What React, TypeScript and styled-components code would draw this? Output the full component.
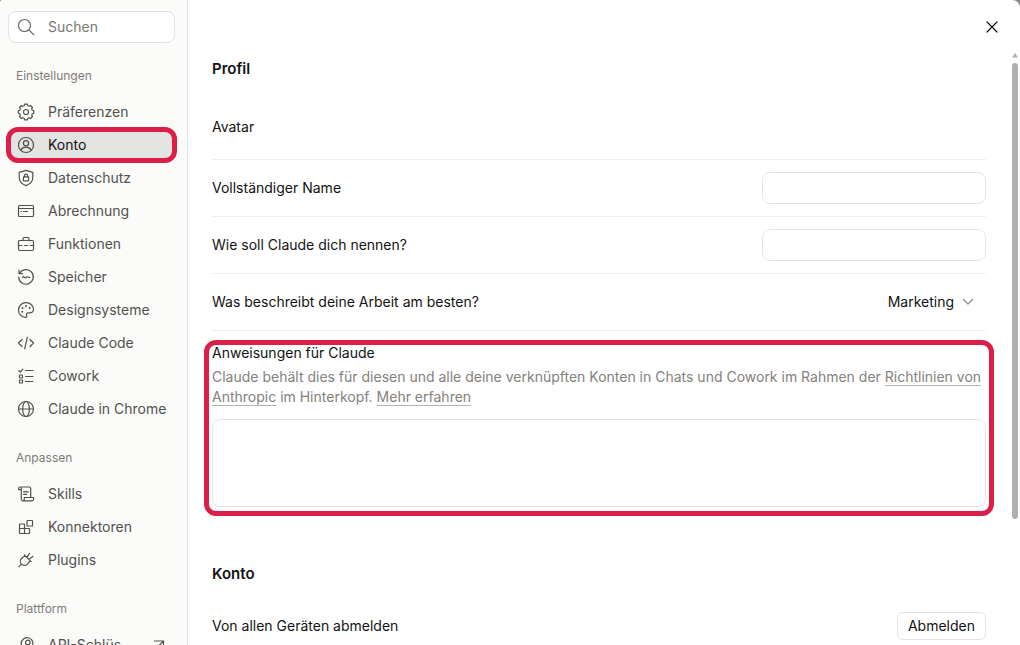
import React from 'react';
import styled, { createGlobalStyle, css } from 'styled-components';

const GlobalStyle = createGlobalStyle`
  *, *::before, *::after { box-sizing: border-box; }
  body {
    margin: 0;
    background: #8c8c8c;
    color: #121212;
    font-family: Inter, "Liberation Sans", sans-serif;
    font-size: 14px;
    line-height: 20px;
  }
  button, input, select, textarea { font: inherit; color: inherit; }
`;

const marked = css`
  position: relative;
  &::after {
    content: '';
    position: absolute;
    border: 5px solid #db1f48;
    border-radius: 12px;
    pointer-events: none;
  }
`;

const Dialog = styled.div`
  display: flex;
  height: 100vh;
  overflow: hidden;
  background: #fff;
  border-radius: 3px 8px 0 0;
`;

const Sidebar = styled.nav`
  flex: 0 0 188px;
  padding: 11px 12px 0 8px;
  border-right: 1px solid #e3e3e2;
  background: #fbfbfa;
  overflow: hidden;
`;

const SearchBox = styled.label`
  display: flex;
  align-items: center;
  gap: 12px;
  height: 32px;
  padding: 0 7px;
  border: 1px solid #e2e2e1;
  border-radius: 8px;
  background: #fff;
  color: #6b6b69;
`;

const SearchInput = styled.input`
  flex: 1;
  min-width: 0;
  padding: 0;
  border: 0;
  outline: 0;
  background: none;
  &::placeholder { color: #7b7974; opacity: 1; }
`;

const Group = styled.section`
  padding-top: 23px;
`;

const GroupTitle = styled.h3`
  margin: 0 0 10px;
  padding: 0 8px;
  font-size: 12px;
  font-weight: 400;
  line-height: 20px;
  color: #7f7d78;
`;

const NavList = styled.ul`
  display: flex;
  flex-direction: column;
  gap: 1px;
  margin: 0;
  padding: 0;
  list-style: none;
`;

const Glyph = styled.svg`
  flex: none;
  display: block;
  fill: none;
  stroke: currentColor;
  stroke-width: 1.2;
  stroke-linecap: round;
  stroke-linejoin: round;
`;

const NavLink = styled.a<{ $active?: boolean }>`
  display: flex;
  align-items: center;
  gap: 12px;
  height: 32px;
  padding: 0 8px;
  border-radius: 8px;
  color: #52514e;
  text-decoration: none;
  white-space: nowrap;
  ${p => p.$active && css`
    ${marked}
    background: #e3e3e2;
    color: #121212;
    ${Glyph} { color: #52514e; }
    &::after { inset: -2px; }
  `}
`;

const NavText = styled.span`
  flex: 1;
`;

const Main = styled.main`
  flex: 1;
  min-width: 0;
  display: flex;
  flex-direction: column;
`;

const TopBar = styled.header`
  display: flex;
  flex: none;
  justify-content: flex-end;
  padding: 11px 12px 8px;
`;

const IconButton = styled.button`
  display: grid;
  place-items: center;
  width: 32px;
  height: 32px;
  padding: 0;
  border: 0;
  border-radius: 8px;
  background: none;
`;

const ScrollArea = styled.div`
  flex: 1;
  min-height: 0;
  display: flex;
`;

const Content = styled.div`
  flex: 1;
  min-width: 0;
  padding: 8px 24px 0;
  overflow: hidden;
`;

const ScrollTrack = styled.div`
  flex: 0 0 10px;
  display: flex;
  flex-direction: column;
  align-items: center;
  gap: 5px;
  padding-top: 2px;
  color: #afafaf;
`;

const ScrollThumb = styled.div`
  width: 6px;
  height: 77%;
  border-radius: 3px;
  background: #afafaf;
`;

const Heading = styled.h2`
  margin: 0 0 16px;
  font-size: 15px;
  font-weight: 600;
  line-height: 20px;
`;

const Row = styled.div<{ $tall?: boolean }>`
  display: flex;
  align-items: center;
  justify-content: space-between;
  min-height: ${p => (p.$tall ? '65px' : 'auto')};
  padding: 12px 0;
  border-bottom: 1px solid #efefee;
`;

const TextInput = styled.input`
  width: 224px;
  height: 32px;
  padding: 0 12px;
  border: 1px solid #e4e4e3;
  border-radius: 8px;
  background: #fff;
`;

const SelectWrap = styled.span`
  display: flex;
  align-items: center;
  gap: 8px;
  padding-right: 12px;
`;

const Select = styled.select`
  appearance: none;
  height: 32px;
  padding: 0;
  border: 0;
  background: none;
  field-sizing: content;
`;

const Instructions = styled.div`
  ${marked}
  margin-top: 12px;
  margin-bottom: 57px;
  &::after { inset: -3px -8px -9px; }
`;

const Label = styled.label`
  display: block;
`;

const Hint = styled.p`
  margin: 4px 0 12px;
  color: #83817c;
`;

const HintLink = styled.a`
  color: inherit;
  text-decoration: none;
  border-bottom: 1px solid #b5b4b0;
`;

const TextArea = styled.textarea`
  display: block;
  width: 100%;
  height: 88px;
  padding: 8px 12px;
  border: 1px solid #e4e4e3;
  border-radius: 8px;
  background: #fff;
  resize: none;
`;

const OutlineButton = styled.button`
  height: 28px;
  padding: 0 10px;
  border: 1px solid #e2e2e1;
  border-radius: 6px;
  background: #fff;
`;

const Icon = ({ children, size = 20 }: { children: React.ReactNode; size?: number }) => (
  <Glyph width={size} height={size} viewBox={`0 0 ${size} ${size}`} aria-hidden="true">
    {children}
  </Glyph>
);

// Eight-toothed cog: each tooth is a flat top between two shallow valleys.
const cogPath = (() => {
  const at = (deg: number, r: number) => {
    const a = (deg * Math.PI) / 180;
    return `${(10 + r * Math.cos(a)).toFixed(2)} ${(10 + r * Math.sin(a)).toFixed(2)}`;
  };
  const teeth = Array.from({ length: 8 }, (_, i) => {
    const a = i * 45;
    return `${at(a - 10, 7.9)} L${at(a + 10, 7.9)} L${at(a + 15, 6.7)} Q${at(a + 22.5, 6)} ${at(a + 30, 6.7)}`;
  });
  return `M${teeth.join(' L')}Z`;
})();

const icons = {
  gear: (
    <Icon>
      <path d={cogPath} />
      <circle cx="10" cy="10" r="2.5" />
    </Icon>
  ),
  user: (
    <Icon>
      <circle cx="10" cy="10" r="7.5" />
      <circle cx="10" cy="8.3" r="2.6" />
      <path d="M4.8 15.2c1-2 3-3 5.200-3s4.200 1 5.200 3" />
    </Icon>
  ),
  shield: (
    <Icon>
      <path d="M10 2.4 16.800 4.400v5.200c0 4-2.700 6.600-6.800 8-4.100-1.400-6.800-4-6.800-8V4.400z" />
      <rect x="7.4" y="8.900" width="5.200" height="4" rx=".5" />
      <path d="M8.400 8.900V7.700a1.600 1.600 0 0 1 3.200 0v1.200" />
    </Icon>
  ),
  card: (
    <Icon>
      <rect x="2.500" y="4.500" width="15" height="11" rx="1" />
      <path d="M2.500 7.500h15M5 10.500h.5M7.500 10.500h4" />
    </Icon>
  ),
  toolbox: (
    <Icon>
      <rect x="2.500" y="6.500" width="15" height="10" rx="1.200" />
      <path d="M7 6.500V4.700c0-.7.5-1.200 1.200-1.200h3.600c.7 0 1.200.5 1.200 1.200v1.800M2.500 11.500H6M8.500 11.500h3M14 11.500h3.500" />
    </Icon>
  ),
  memory: (
    <Icon>
      <path d="M3.600 6.400A7.300 7.300 0 1 1 2.700 10M3 3.200v3.400h3.400" />
      <path d="M6.300 10.300c.8-.8 1.500-.8 2.100 0s1.200.7 1.800 0 1.300-.8 2 0h1.500" />
    </Icon>
  ),
  palette: (
    <Icon>
      <path d="M10 2.600c4.200 0 7.500 3 7.500 6.700 0 2.400-1.700 3.500-3.600 3.500h-1.500c-1.500 0-2.200 1-1.800 2.300.4 1.300.2 2.400-1.300 2.300-3.900-.2-6.800-3.400-6.800-7.300 0-4.200 3.300-7.500 7.500-7.500z" />
      <g fill="currentColor" stroke="none">
        <circle cx="6.200" cy="11.700" r="1" />
        <circle cx="6.500" cy="8" r="1" />
        <circle cx="10" cy="5.900" r="1" />
        <circle cx="13.600" cy="7.900" r="1" />
      </g>
    </Icon>
  ),
  code: (
    <Icon>
      <path d="M6 6.500 2.500 10 6 13.500M14 6.500l3.500 3.500-3.500 3.500M11.300 4.200 8.700 15.800" />
    </Icon>
  ),
  checklist: (
    <Icon>
      <path d="M3 4.700 4.400 6l2.500-2.900M9.500 4.500H17M9.500 10.500H17M9.500 15.500H17" />
      <rect x="3.500" y="9" width="3" height="3" rx=".6" />
      <rect x="3.500" y="14" width="3" height="3" rx=".6" />
    </Icon>
  ),
  globe: (
    <Icon>
      <circle cx="10" cy="10" r="7.500" />
      <ellipse cx="10" cy="10" rx="3.400" ry="7.500" />
      <path d="M2.500 10h15" />
    </Icon>
  ),
  scroll: (
    <Icon>
      <path d="M5.300 5.600H2.600V4.500c0-.9.600-1.500 1.400-1.500h9.300c.8 0 1.400.6 1.400 1.400v8.900M5.300 4v11.300c0 .9.600 1.500 1.500 1.500H16c1 0 1.600-.8 1.600-1.800v-1.500H8.300V15c0 1-.6 1.800-1.500 1.800" />
      <path d="M7.600 7.900h1.200l.8-.5 1 .5h1.700M7.600 10.300h3" />
    </Icon>
  ),
  blocks: (
    <Icon>
      <path d="M8.500 11.500v-4a.5.500 0 0 0-.5-.5H4a.5.500 0 0 0-.5.500V16a.5.500 0 0 0 .5.500h9a.5.500 0 0 0 .5-.5v-4a.5.500 0 0 0-.5-.5zM3.500 11.500h5v5" />
      <rect x="11" y="3.500" width="5.500" height="5.500" rx=".6" />
    </Icon>
  ),
  plug: (
    <Icon>
      <path d="m8.300 4.900 6.800 6.800M9.200 5.800 5.700 8.300C4 9.900 3.900 12.600 5.400 14.200s4.300 1.700 5.900.2l2.900-3.600M5.300 14.300 3 16.700M10.900 7.300l2.700-3.900M12.900 9.300l4-2.900" />
    </Icon>
  ),
  key: (
    <Icon>
      <path d="M6.500 12.500C4.700 9.500 5 6 7.500 4s6.300-1.600 8.200.9 1.500 6-.9 7.900c-1 .8-2.300 1.100-3.500 1L9 17" />
      <circle cx="11.800" cy="7.500" r="2.300" />
      <path d="m10.200 9.500-4 6" />
    </Icon>
  ),
};

type Entry = { icon: keyof typeof icons; text: string; active?: boolean; external?: boolean };

const groups: { title: string; entries: Entry[] }[] = [
  {
    title: 'Einstellungen',
    entries: [
      { icon: 'gear', text: 'Präferenzen' },
      { icon: 'user', text: 'Konto', active: true },
      { icon: 'shield', text: 'Datenschutz' },
      { icon: 'card', text: 'Abrechnung' },
      { icon: 'toolbox', text: 'Funktionen' },
      { icon: 'memory', text: 'Speicher' },
      { icon: 'palette', text: 'Designsysteme' },
      { icon: 'code', text: 'Claude Code' },
      { icon: 'checklist', text: 'Cowork' },
      { icon: 'globe', text: 'Claude in Chrome' },
    ],
  },
  {
    title: 'Anpassen',
    entries: [
      { icon: 'scroll', text: 'Skills' },
      { icon: 'blocks', text: 'Konnektoren' },
      { icon: 'plug', text: 'Plugins' },
    ],
  },
  { title: 'Plattform', entries: [{ icon: 'key', text: 'API-Schlüs', external: true }] },
];

export default function App() {
  return (
    <>
      <GlobalStyle />
      <Dialog role="dialog" aria-label="Einstellungen">
        <Sidebar>
          <SearchBox>
            <Icon>
              <circle cx="8.500" cy="8.500" r="6" />
              <path d="m13 13 4.800 4.800" />
            </Icon>
            <SearchInput type="search" placeholder="Suchen" aria-label="Suchen" />
          </SearchBox>
          {groups.map(group => (
            <Group key={group.title}>
              <GroupTitle>{group.title}</GroupTitle>
              <NavList>
                {group.entries.map(entry => (
                  <li key={entry.text}>
                    <NavLink href="#" $active={entry.active} aria-current={entry.active ? 'page' : undefined}>
                      {icons[entry.icon]}
                      <NavText>{entry.text}</NavText>
                      {entry.external && (
                        <Icon size={16}>
                          <path d="M3.500 4h9v9M12.500 4l-9 9" />
                        </Icon>
                      )}
                    </NavLink>
                  </li>
                ))}
              </NavList>
            </Group>
          ))}
        </Sidebar>
        <Main>
          <TopBar>
            <IconButton type="button" aria-label="Schließen">
              <Icon>
                <path d="m5 5 10 10M15 5 5 15" />
              </Icon>
            </IconButton>
          </TopBar>
          <ScrollArea>
            <Content>
              <Heading>Profil</Heading>
              <Row $tall>Avatar</Row>
              <Row>
                <Label htmlFor="full-name">Vollständiger Name</Label>
                <TextInput id="full-name" type="text" />
              </Row>
              <Row>
                <Label htmlFor="nickname">Wie soll Claude dich nennen?</Label>
                <TextInput id="nickname" type="text" />
              </Row>
              <Row>
                <Label htmlFor="work">Was beschreibt deine Arbeit am besten?</Label>
                <SelectWrap>
                  <Select id="work" defaultValue="Marketing">
                    <option>Marketing</option>
                  </Select>
                  <Glyph width="12" height="12" viewBox="0 0 12 12" color="#8a8a88" aria-hidden="true">
                    <path d="m1.500 3.500 4.500 4.500 4.500-4.500" />
                  </Glyph>
                </SelectWrap>
              </Row>
              <Instructions>
                <Label htmlFor="instructions">Anweisungen für Claude</Label>
                <Hint>
                  Claude behält dies für diesen und alle deine verknüpften Konten in Chats und Cowork im Rahmen der{' '}
                  <HintLink href="#">Richtlinien von Anthropic</HintLink> im Hinterkopf.{' '}
                  <HintLink href="#">Mehr erfahren</HintLink>
                </Hint>
                <TextArea id="instructions" />
              </Instructions>
              <Heading>Konto</Heading>
              <Row>
                Von allen Geräten abmelden
                <OutlineButton type="button">Abmelden</OutlineButton>
              </Row>
            </Content>
            <ScrollTrack aria-hidden="true">
              <svg width="6" height="5" viewBox="0 0 6 5" fill="currentColor">
                <path d="M3 0 6 4.500H0z" />
              </svg>
              <ScrollThumb />
            </ScrollTrack>
          </ScrollArea>
        </Main>
      </Dialog>
    </>
  );
}
